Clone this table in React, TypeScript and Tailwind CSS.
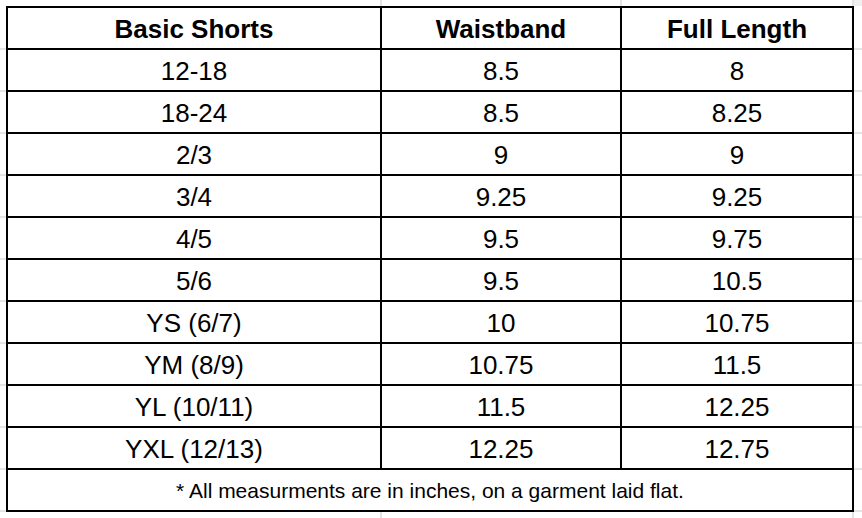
import React from "react";

const rows: [string, string, string][] = [
  ["12-18", "8.5", "8"],
  ["18-24", "8.5", "8.25"],
  ["2/3", "9", "9"],
  ["3/4", "9.25", "9.25"],
  ["4/5", "9.5", "9.75"],
  ["5/6", "9.5", "10.5"],
  ["YS (6/7)", "10", "10.75"],
  ["YM (8/9)", "10.75", "11.5"],
  ["YL (10/11)", "11.5", "12.25"],
  ["YXL (12/13)", "12.25", "12.75"],
];

const stubs = Array.from({ length: 12 }, (_, i) => i);

export default function App() {
  return (
    <div
      className="w-[862px] h-[518px] bg-white text-black overflow-hidden flex flex-col"
      style={{ fontFamily: '"Liberation Sans", Arial, sans-serif' }}
    >
      {/* top gridline stubs */}
      <div className="h-[6px] flex shrink-0">
        <div className="w-[380px]" />
        <div className="w-[2px] bg-[#e4e4e4]" />
        <div className="w-[238px]" />
        <div className="w-[2px] bg-[#e4e4e4]" />
        <div className="w-[230px]" />
        <div className="w-[2px] bg-[#e4e4e4]" />
        <div className="flex-1 bg-[#f0f0f0]" />
      </div>

      <div className="flex shrink-0">
        {/* left gutter */}
        <div className="w-[6px] flex flex-col pt-[2px]">
          {stubs.map((i) => (
            <div key={i} className="h-[42px] border-b-2 border-[#e4e4e4]" />
          ))}
        </div>

        {/* table */}
        <div className="grid grid-cols-[372px_238px_230px] auto-rows-[40px] gap-[2px] bg-black p-[2px]">
          {["Basic Shorts", "Waistband", "Full Length"].map((h) => (
            <div
              key={h}
              className="bg-white flex items-center justify-center text-[26px] font-bold leading-none pt-[1px]"
            >
              {h}
            </div>
          ))}
          {rows.map((r) =>
            r.map((c, j) => (
              <div
                key={r[0] + j}
                className="bg-white flex items-center justify-center text-[26px] leading-none pt-[2px]"
              >
                {c}
              </div>
            ))
          )}
          <div className="col-span-3 bg-white flex items-center justify-center text-[21px] leading-none pt-[1px]">
            * All measurments are in inches, on a garment laid flat.
          </div>
        </div>

        {/* right gutter */}
        <div className="flex-1 flex flex-col pt-[2px]">
          {stubs.map((i) => (
            <div key={i} className="h-[42px] border-b-2 border-[#e4e4e4]" />
          ))}
        </div>
      </div>

      {/* bottom gridline stubs */}
      <div className="flex-1 flex">
        <div className="w-[380px]" />
        <div className="w-[2px] bg-[#e4e4e4]" />
        <div className="w-[470px]" />
        <div className="w-[2px] bg-[#e4e4e4]" />
      </div>
    </div>
  );
}
